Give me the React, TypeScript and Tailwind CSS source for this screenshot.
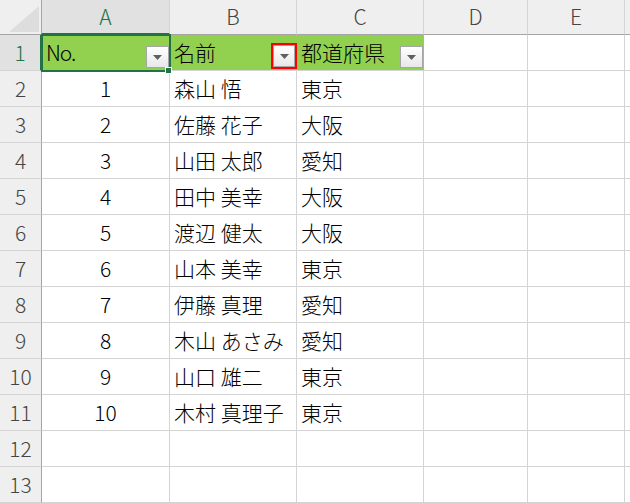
import React from "react";

const COLS = ["A", "B", "C", "D", "E"];

const ROWS: [string, string, string][] = [
  ["1", "森山 悟", "東京"],
  ["2", "佐藤 花子", "大阪"],
  ["3", "山田 太郎", "愛知"],
  ["4", "田中 美幸", "大阪"],
  ["5", "渡辺 健太", "大阪"],
  ["6", "山本 美幸", "東京"],
  ["7", "伊藤 真理", "愛知"],
  ["8", "木山 あさみ", "愛知"],
  ["9", "山口 雄二", "東京"],
  ["10", "木村 真理子", "東京"],
];

const font = { fontFamily: '"Noto Sans CJK JP", "Noto Sans", sans-serif' };

function FilterButton({ marked = false }: { marked?: boolean }) {
  return (
    <div
      className={`absolute right-0 bottom-[1px] flex items-center justify-center ${
        marked ? "w-[26px] h-[26px] border-2 border-[#ff0000]" : "w-[25px] h-[24px]"
      }`}
    >
      <div className="w-[23px] h-[22px] border border-[#a6a6a6] bg-gradient-to-b from-white to-[#e8e8ec] flex items-center justify-center">
        <svg width="9" height="5" viewBox="0 0 9 5">
          <path d="M0 0 H9 L4.5 5 Z" fill="#5f5f5f" />
        </svg>
      </div>
    </div>
  );
}

function HeaderCell({ children, w, active = false }: { children?: React.ReactNode; w: string; active?: boolean }) {
  return (
    <div
      className={`${w} h-[35px] shrink-0 flex items-center justify-center border-r border-b text-[21px] font-light ${
        active ? "bg-[#e1e1e1] border-b-[#217346] border-b-2 text-[#217346]" : "bg-[#efefef] border-b-[#a5a5a5] text-[#444]"
      } border-r-[#d4d4d4]`}
    >
      {children}
    </div>
  );
}

const widths = ["w-[128px]", "w-[127px]", "w-[127px]", "w-[104px]", "w-[97px]"];

export default function App() {
  return (
    <div className="w-[630px] h-[503px] overflow-hidden bg-white relative" style={font}>
      {/* column headers */}
      <div className="flex">
        <div className="w-[42px] h-[35px] shrink-0 bg-[#efefef] border-r border-b border-r-[#a5a5a5] border-b-[#a5a5a5] relative">
          <svg className="absolute right-[2px] bottom-[2px]" width="32" height="26" viewBox="0 0 32 26">
            <path d="M32 0 V26 H2 Z" fill="#dddddd" />
          </svg>
        </div>
        {COLS.map((c, i) => (
          <HeaderCell key={c} w={widths[i]} active={i === 0}>
            {c}
          </HeaderCell>
        ))}
        <div className="flex-1 h-[35px] bg-[#efefef] border-b border-b-[#a5a5a5]" />
      </div>

      {/* row 1: table header */}
      <div className="flex h-[36px] font-light">
        <div className="w-[42px] shrink-0 bg-[#e1e1e1] border-r-2 border-r-[#217346] border-b border-b-[#d4d4d4] flex items-center justify-center text-[21px] text-[#217346]">
          1
        </div>
        <div className="w-[128px] shrink-0 bg-[#92d050] border-b border-b-[#d4d4d4] relative flex items-center pl-[4px] text-[21px] text-black">
          <span className="tracking-[-1px]">No.</span>
          <FilterButton />
        </div>
        <div className="w-[127px] shrink-0 bg-[#92d050] border-b border-b-[#d4d4d4] relative flex items-center pl-[4px] text-[21px] text-black">
          名前
          <FilterButton marked />
        </div>
        <div className="w-[127px] shrink-0 bg-[#92d050] border-b border-b-[#d4d4d4] relative flex items-center pl-[4px] text-[21px] text-black">
          都道府県
          <FilterButton />
        </div>
        <div className="w-[104px] shrink-0 border-r border-b border-[#d4d4d4]" />
        <div className="w-[97px] shrink-0 border-r border-b border-[#d4d4d4]" />
        <div className="flex-1 border-b border-[#d4d4d4]" />
      </div>

      {/* data rows */}
      {Array.from({ length: 12 }).map((_, r) => {
        const row = ROWS[r];
        return (
          <div key={r} className="flex h-[36px] font-light">
            <div className="w-[42px] shrink-0 bg-[#efefef] border-r border-b border-r-[#a5a5a5] border-b-[#d4d4d4] flex items-center justify-center text-[21px] text-[#444]">
              {r + 2}
            </div>
            <div className="w-[128px] shrink-0 border-r border-b border-[#d4d4d4] flex items-center justify-center text-[21px] text-black">
              {row?.[0]}
            </div>
            <div className="w-[127px] shrink-0 border-r border-b border-[#d4d4d4] flex items-center pl-[4px] text-[21px] text-black whitespace-nowrap">
              {row?.[1]}
            </div>
            <div className="w-[127px] shrink-0 border-r border-b border-[#d4d4d4] flex items-center pl-[4px] text-[21px] text-black">
              {row?.[2]}
            </div>
            <div className="w-[104px] shrink-0 border-r border-b border-[#d4d4d4]" />
            <div className="w-[97px] shrink-0 border-r border-b border-[#d4d4d4]" />
            <div className="flex-1 border-b border-[#d4d4d4]" />
          </div>
        );
      })}

      {/* active cell selection */}
      <div className="absolute left-[41px] top-[34px] w-[130px] h-[38px] border-2 border-[#217346] pointer-events-none" />
      <div className="absolute left-[165px] top-[67px] w-[7px] h-[7px] bg-[#217346] border border-white" />
    </div>
  );
}
